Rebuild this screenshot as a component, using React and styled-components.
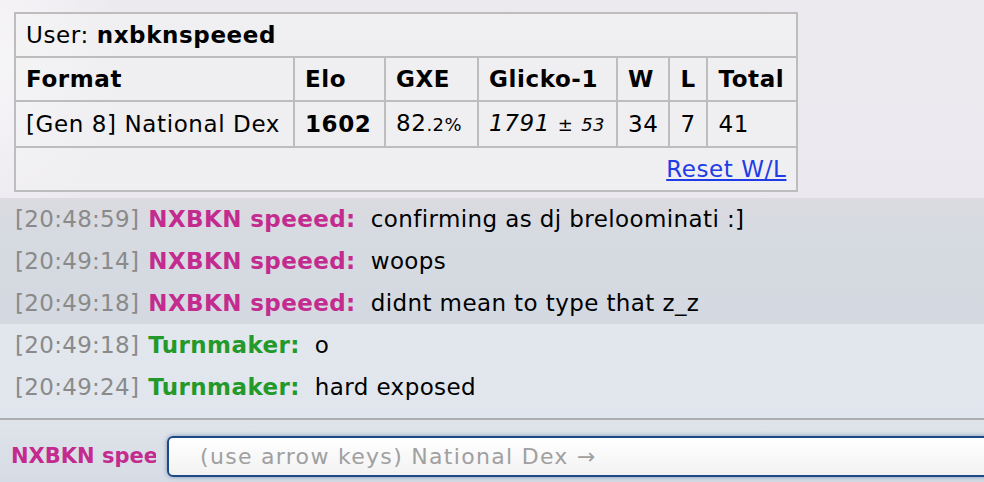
import React from "react";
import styled, { createGlobalStyle } from "styled-components";

const GlobalStyle = createGlobalStyle`
  html, body {
    margin: 0;
    padding: 0;
  }
  body {
    font-family: "DejaVu Sans", Verdana, sans-serif;
    color: #000;
  }
`;

// content widths (without padding) so the borders land where the picture has them
const columns = [
  { label: "Format", width: 257 },
  { label: "Elo", width: 69 },
  { label: "GXE", width: 71 },
  { label: "Glicko-1", width: 117 },
  { label: "W", width: 30 },
  { label: "L", width: 16 },
  { label: "Total", width: 68 },
];

const messages = [
  { time: "20:48:59", name: "NXBKN speeed", text: "confirming as dj breloominati :]", group: "self" },
  { time: "20:49:14", name: "NXBKN speeed", text: "woops", group: "self" },
  { time: "20:49:18", name: "NXBKN speeed", text: "didnt mean to type that z_z", group: "self" },
  { time: "20:49:18", name: "Turnmaker", text: "o", group: "other" },
  { time: "20:49:24", name: "Turnmaker", text: "hard exposed", group: "other" },
];

const nameColors = {
  "NXBKN speeed": "#c42b8f",
  Turnmaker: "#23992a",
};

const App = () => {
  const self = messages.filter((m) => m.group === "self");
  const other = messages.filter((m) => m.group === "other");
  return (
    <Page>
      <GlobalStyle />
      <Log>
        <RankBlock>
          <RankTable>
            <tbody>
              <tr>
                <Cell colSpan={7}>
                  User: <strong>nxbknspeeed</strong>
                </Cell>
              </tr>
              <tr>
                {columns.map((c) => (
                  <HeadCell key={c.label} style={{ width: c.width }}>
                    {c.label}
                  </HeadCell>
                ))}
              </tr>
              <tr>
                <Cell>[Gen 8] National Dex</Cell>
                <Cell>
                  <strong>1602</strong>
                </Cell>
                <Cell>
                  82<Small>.2%</Small>
                </Cell>
                <Cell>
                  <em>
                    1791 <Small>±</Small> <Small>53</Small>
                  </em>
                </Cell>
                <Cell>34</Cell>
                <Cell>7</Cell>
                <Cell>41</Cell>
              </tr>
              <tr>
                <FootCell colSpan={7}>
                  <ResetLink href="#">Reset W/L</ResetLink>
                </FootCell>
              </tr>
            </tbody>
          </RankTable>
        </RankBlock>
        <ChatGroup tone="self">
          {self.map((m, i) => (
            <ChatLine key={i}>
              <Stamp>[{m.time}]</Stamp>
              <Author color={nameColors[m.name]}>{m.name}:</Author>
              <Said>{m.text}</Said>
            </ChatLine>
          ))}
        </ChatGroup>
        <ChatGroup tone="other">
          {other.map((m, i) => (
            <ChatLine key={i}>
              <Stamp>[{m.time}]</Stamp>
              <Author color={nameColors[m.name]}>{m.name}:</Author>
              <Said>{m.text}</Said>
            </ChatLine>
          ))}
        </ChatGroup>
      </Log>
      <ComposeBar>
        <ComposeName>NXBKN speeed</ComposeName>
        <ComposeInput placeholder="(use arrow keys) National Dex →" />
      </ComposeBar>
    </Page>
  );
};

export default App;

const Page = styled.div`
  width: 984px;
  height: 482px;
  display: flex;
  flex-direction: column;
  overflow: hidden;
  background: linear-gradient(180deg, #ece8ee 0%, #e6e7ee 60%, #dfe4ec 100%);
`;

const Log = styled.div`
  height: 418px;
  display: flex;
  flex-direction: column;
  border-bottom: 2px solid #acacac;
  background:
    radial-gradient(ellipse 120px 200px at 0px 60px, rgba(255, 255, 255, 0.55), transparent),
    linear-gradient(180deg, #edeaef 0%, #ebe8ef 45%, #e5e8ef 100%);
`;

const RankBlock = styled.div`
  padding: 12px 0 6px 14px;
`;

const RankTable = styled.table`
  border-collapse: collapse;
  border: 2px solid #bdbdbd;
  font-size: 23px;
  letter-spacing: 0.6px;
  line-height: 26px;
  background: rgba(242, 242, 243, 0.55);
`;

const Cell = styled.td`
  border: 2px solid #bdbdbd;
  padding: 8px 10px;
  text-align: left;
  white-space: nowrap;
  height: 26px;
`;

const HeadCell = styled.th`
  border: 2px solid #bdbdbd;
  padding: 8px 10px;
  text-align: left;
  font-weight: bold;
  white-space: nowrap;
  height: 26px;
`;

const FootCell = styled(Cell)`
  text-align: right;
`;

const Small = styled.small`
  font-size: 18px;
  letter-spacing: 0.4px;
`;

const ResetLink = styled.a`
  color: #1f3ce6;
  text-decoration: underline;
`;

const ChatGroup = styled.div`
  display: flex;
  flex-direction: column;
  flex: ${(p) => (p.tone === "other" ? 1 : "none")};
  background: ${(p) =>
    p.tone === "self"
      ? "linear-gradient(180deg, #dbdbe0 0%, #d6dae1 30%, #d4d9e1 100%)"
      : "linear-gradient(180deg, #e2e6ed 0%, #e1e6ee 100%)"};
`;

const ChatLine = styled.div`
  height: 42px;
  line-height: 42px;
  padding-left: 15px;
  font-size: 23px;
  letter-spacing: 0.4px;
  white-space: nowrap;
`;

const Stamp = styled.span`
  color: #8a8a8a;
  margin-right: 9px;
  letter-spacing: 0.3px;
`;

const Author = styled.strong`
  color: ${(p) => p.color};
  font-weight: bold;
`;

const Said = styled.span`
  margin-left: 15px;
`;

const ComposeBar = styled.div`
  flex: 1;
  display: flex;
  align-items: flex-start;
  padding-top: 16px;
  background: linear-gradient(180deg, #dfe3ea 0%, #d6dce5 100%);
`;

const ComposeName = styled.div`
  flex: none;
  width: 145px;
  margin-left: 11px;
  margin-right: 11px;
  overflow: hidden;
  white-space: nowrap;
  font-size: 21px;
  line-height: 41px;
  font-weight: bold;
  color: #c42b8f;
`;

const ComposeInput = styled.input`
  flex: none;
  width: 840px;
  height: 41px;
  box-sizing: border-box;
  border: 2px solid #1d4a85;
  border-radius: 6px;
  padding: 0 0 0 31px;
  font-family: "DejaVu Sans", sans-serif;
  font-size: 22px;
  letter-spacing: 1.3px;
  background: linear-gradient(180deg, #ffffff 0%, #f2f2f2 100%);
  box-shadow: 0 0 4px rgba(29, 74, 133, 0.5);
  outline: none;

  &::placeholder {
    color: #a0a0a0;
  }
`;
